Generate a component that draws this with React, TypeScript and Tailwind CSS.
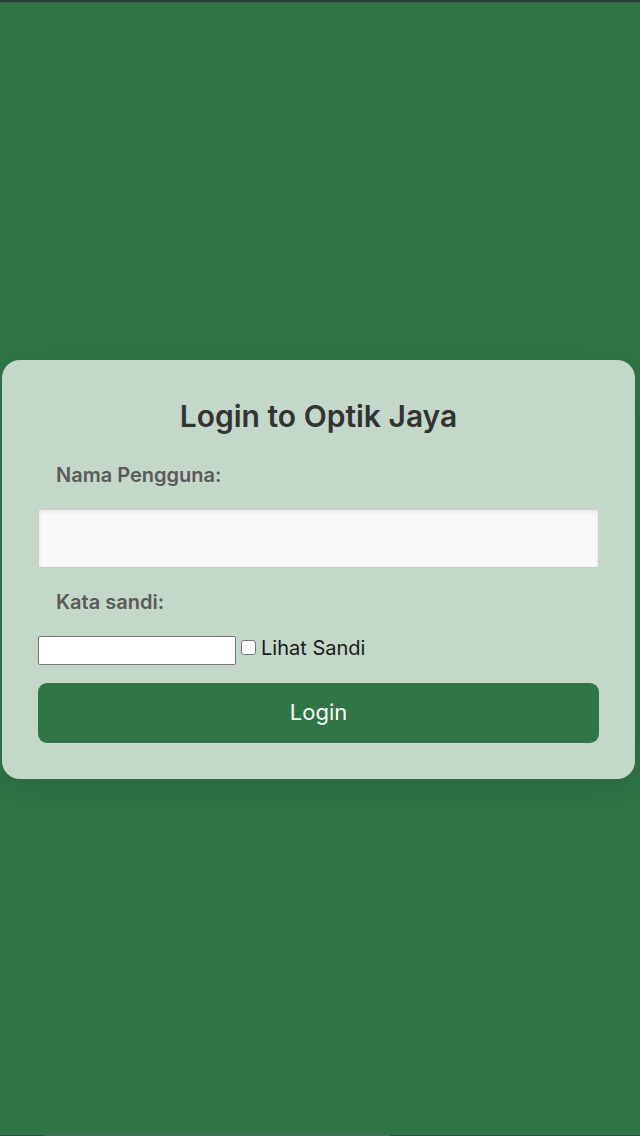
import { useState } from "react";

export default function App() {
  const [visible, setVisible] = useState(false);

  return (
    <div className="flex min-h-screen flex-col bg-[#2f7546] font-['Inter','Open_Sans',sans-serif]">
      <div className="h-[3px] border-b border-[#3f5a50] bg-[#2a403f]" />
      <main className="flex flex-1 flex-col justify-center pr-[5px] pl-[2px]">
        <form
          className="rounded-[18px] bg-[#c4d8c9] p-9 shadow-[0_9px_36px_rgba(0,0,0,0.13)]"
          onSubmit={(event) => event.preventDefault()}
        >
          <h1 className="mb-[25px] text-center text-[30px] leading-10 font-semibold text-[#333333]">
            Login to Optik Jaya
          </h1>

          <label
            htmlFor="username"
            className="mb-5 block px-[18px] text-[20px] leading-7 font-semibold text-[#5a5a5a]"
          >
            Nama Pengguna:
          </label>
          <input
            id="username"
            type="text"
            className="mb-5 block h-[59px] w-full rounded-[2px] border border-[#cccccc] bg-[#f9f9f9] px-4 text-lg shadow-[inset_0_2px_5px_rgba(0,0,0,0.08)]"
          />

          <label
            htmlFor="password"
            className="mb-5 block px-[18px] text-[20px] leading-7 font-semibold text-[#5a5a5a]"
          >
            Kata sandi:
          </label>
          <div className="mb-[18px] flex items-start">
            <input
              id="password"
              type={visible ? "text" : "password"}
              className="h-[29px] w-[198px] rounded-[2px] border border-[#767676] bg-white px-1 text-base"
            />
            <label className="ml-[5px] flex h-6 items-center gap-[5px] text-[20px] leading-6 text-[#1a1a1a]">
              <input
                type="checkbox"
                checked={visible}
                onChange={(event) => setVisible(event.target.checked)}
                className="size-[15px] appearance-none rounded-[3px] border border-[#767676] bg-white checked:bg-[#2f7546]"
              />
              Lihat Sandi
            </label>
          </div>

          <button
            type="submit"
            className="block h-[60px] w-full rounded-[9px] bg-[#2f7546] text-[22px] text-white"
          >
            Login
          </button>
        </form>
      </main>
      <div className="flex h-px bg-[#2f5140]">
        <div className="ml-[7%] w-[54%] bg-[#526a5d]" />
      </div>
    </div>
  );
}
